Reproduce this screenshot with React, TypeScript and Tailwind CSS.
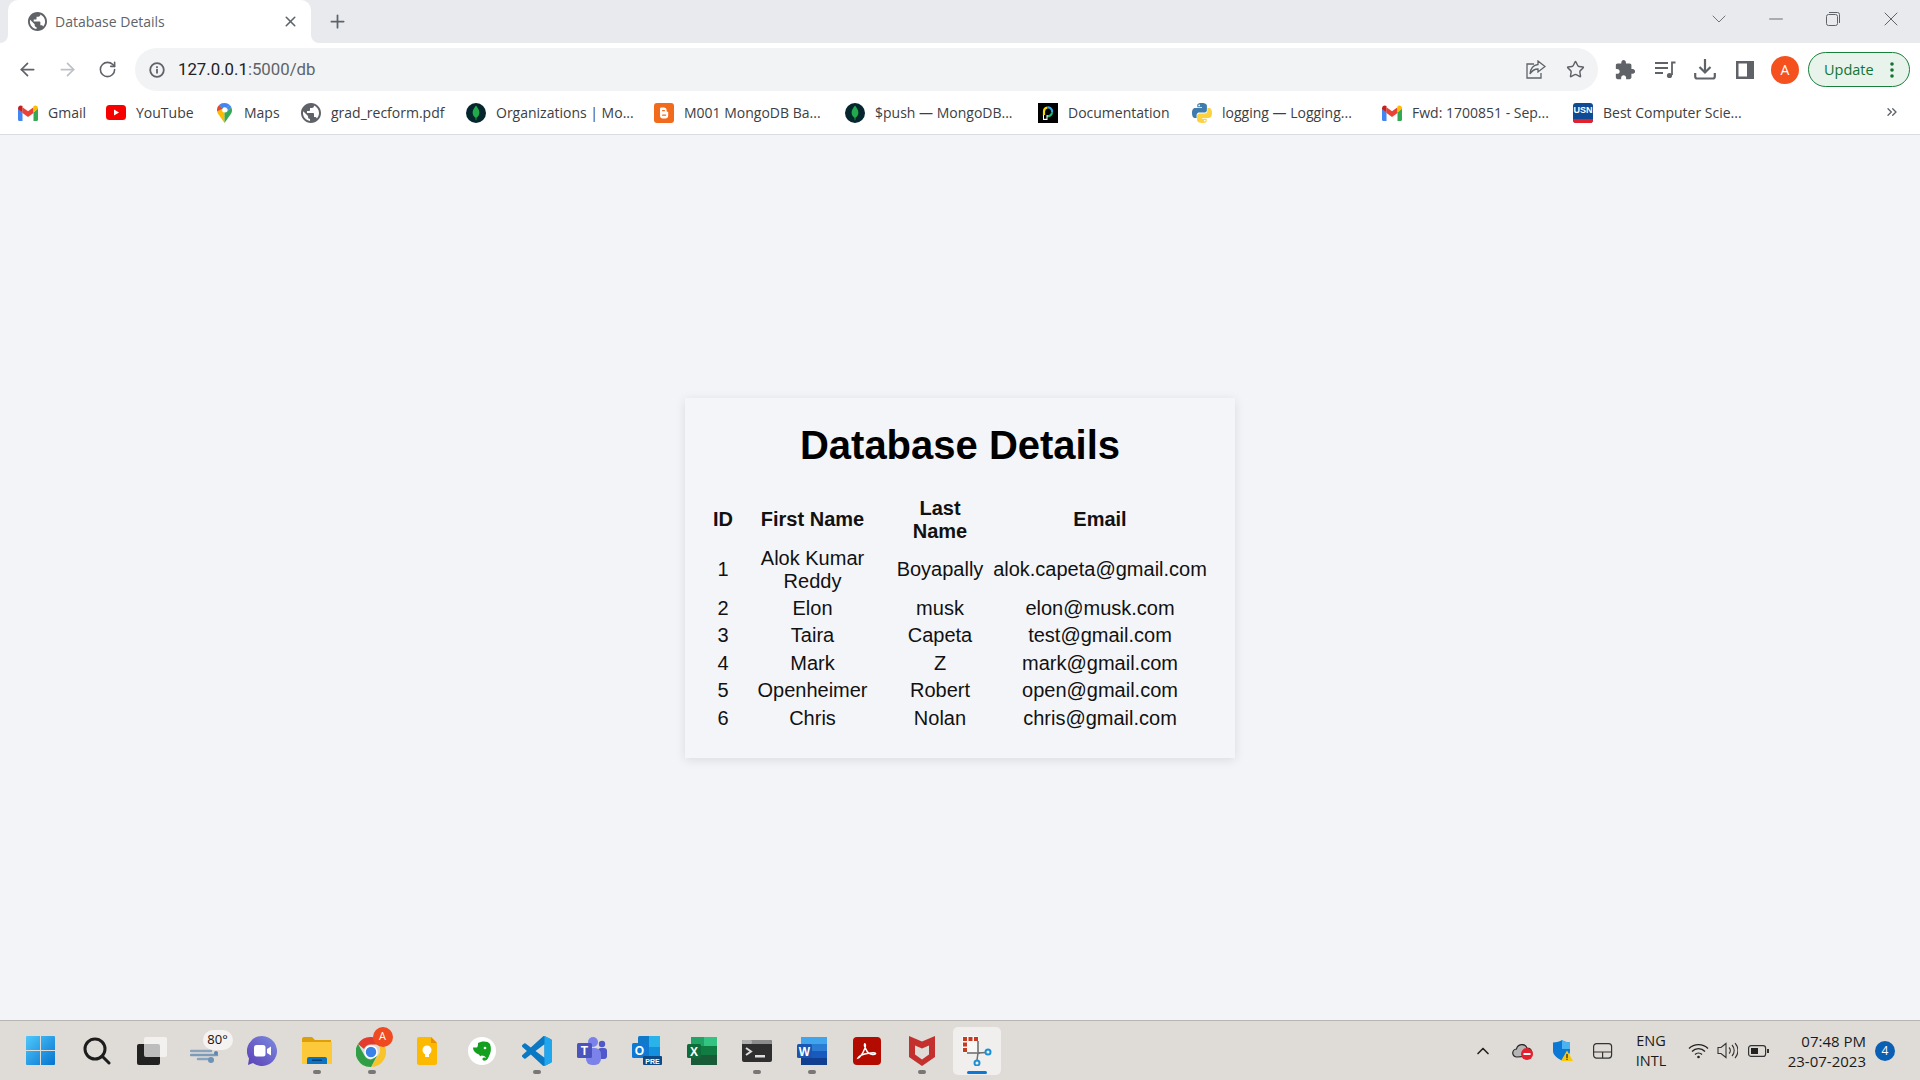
import React from "react";
import { ArrowLeft, ArrowRight, RotateCw, Plus, X, Minus, ChevronDown, ChevronUp, Star, ChevronsRight } from "lucide-react";

const globe = "M12 2C6.48 2 2 6.48 2 12s4.48 10 10 10 10-4.48 10-10S17.52 2 12 2zm-1 17.93c-3.95-.49-7-3.85-7-7.93 0-.62.08-1.21.21-1.79L9 15v1c0 1.1.9 2 2 2v1.93zm6.9-2.54c-.26-.81-1-1.39-1.9-1.39h-1v-3c0-.55-.45-1-1-1H8v-2h2c.55 0 1-.45 1-1V7h2c1.1 0 2-.9 2-2v-.41c2.93 1.19 5 4.06 5 7.41 0 2.08-.8 3.97-2.1 5.39z";
const puzzle = "M20.5 11H19V7c0-1.1-.9-2-2-2h-4V3.5C13 2.12 11.88 1 10.5 1S8 2.12 8 3.5V5H4c-1.1 0-1.99.9-1.99 2v3.8H3.5c1.49 0 2.7 1.21 2.7 2.7s-1.21 2.7-2.7 2.7H2V20c0 1.1.9 2 2 2h3.8v-1.5c0-1.49 1.21-2.7 2.7-2.7 1.49 0 2.7 1.21 2.7 2.7V22H17c1.1 0 2-.9 2-2v-4h1.5c1.38 0 2.5-1.12 2.5-2.5S21.88 11 20.5 11z";

const Globe = ({ size = 20 }: { size?: number }) => (
  <svg width={size} height={size} viewBox="2 2 20 20"><path d={globe} fill="#5f6368" /></svg>
);
const Gmail = () => (
  <svg width="20" height="16" viewBox="0 0 20 16">
    <path d="M0 3v11.5c0 .8.6 1.5 1.4 1.5H4.5V7.5z" fill="#4285f4" />
    <path d="M20 3v11.5c0 .8-.6 1.5-1.4 1.5H15.5V7.5z" fill="#34a853" />
    <path d="M4.5 8V2.2L10 6.3l5.5-4.1V8L10 12z" fill="#ea4335" />
    <path d="M0 3.2C0 .9 2.6-.5 4.5 1v6.5L0 4z" fill="#c5221f" />
    <path d="M20 3.2C20 .9 17.4-.5 15.5 1v6.5L20 4z" fill="#fbbc04" />
  </svg>
);
const YouTube = () => (
  <svg width="20" height="15" viewBox="0 0 20 15">
    <rect width="20" height="15" rx="3.5" fill="#f70000" />
    <path d="M8 4.5v6l5-3z" fill="#fff" />
  </svg>
);
const Maps = () => (
  <svg width="15" height="20" viewBox="0 0 15 20">
    <path d="M7.5 0C3.4 0 0 3.2 0 7.3c0 1.5.5 2.7 1.2 3.8l6.3 8.9V9.6a2.4 2.4 0 0 1-2-3.8z" fill="#fbbc04" />
    <path d="M13.8 11.1c.7-1.1 1.2-2.3 1.2-3.8 0-1.1-.3-2.2-.7-3.1L9.4 9.2 7.5 9.6V20z" fill="#34a853" />
    <path d="M2.1 2.2C.8 3.5 0 5.3 0 7.3c0 .3 0 .6.1.9l5.4-2.4z" fill="#ea4335" />
    <path d="M7.5 0C5.400 0 3.500.8 2.100 2.200L5.500 5.800A2.400 2.400 0 0 1 9.400 4.900L12.800 2.100A7.500 7.500 0 0 0 7.500 0z" fill="#4285f4" />
    <path d="M12.800 2.100 9.400 4.900a2.400 2.400 0 0 1 0 4.300l4.900-5A7.400 7.400 0 0 0 12.800 2.100z" fill="#4285f4" />
  </svg>
);
const Mongo = () => (
  <svg width="20" height="20" viewBox="0 0 20 20">
    <circle cx="10" cy="10" r="10" fill="#04262c" />
    <path d="M10 2.500c1 1.700 3.400 3.700 3.400 7 0 2.800-1.800 4.500-2.900 5.200l-.2 2.500h-.6l-.2-2.500C8.400 14 6.600 12.300 6.600 9.500c0-3.300 2.400-5.300 3.400-7z" fill="#22a94a" />
  </svg>
);
const Blogger = () => (
  <svg width="20" height="20" viewBox="0 0 20 20">
    <rect width="20" height="20" rx="3" fill="#f26a1b" />
    <path d="M6 5.800C6 5 6.700 4.500 7.500 4.500h2.300c1.700 0 2.800 1.100 2.800 2.500V8c0 .6.400.8 1 .8.400 0 .6.300.6.600v3.400c0 1.500-1.100 2.700-2.700 2.700H8.600C7.100 15.500 6 14.300 6 12.800z" fill="#fff" />
    <rect x="8" y="7" width="3" height="1.300" rx=".6" fill="#f26a1b" />
    <rect x="8" y="11.500" width="4.200" height="1.300" rx=".6" fill="#f26a1b" />
  </svg>
);
const Docs = () => (
  <svg width="20" height="20" viewBox="0 0 20 20">
    <rect width="20" height="20" fill="#000" />
    <path d="M6 13V8.500a4 4 0 0 1 3.500-4" stroke="#f5d90a" strokeWidth="2.200" fill="none" />
    <path d="M9.500 4.500a4 4 0 0 1 4.500 5" stroke="#2aa7e8" strokeWidth="2.200" fill="none" />
    <path d="M14 9.500a4 4 0 0 1-5 3.500" stroke="#18c07a" strokeWidth="2.200" fill="none" />
    <rect x="5" y="12" width="4.500" height="5" fill="#fff" />
    <rect x="6" y="12" width="2.500" height="3.800" fill="#000" />
  </svg>
);
const Python = () => (
  <svg width="20" height="20" viewBox="0 0 20 20">
    <path d="M9.900 0C5 0 5.300 2.100 5.300 2.100v2.200h4.700V5H3.300S0 4.600 0 9.900c0 5.200 2.900 5 2.900 5h1.700v-2.400s-.1-2.900 2.800-2.900h4.800s2.700 0 2.700-2.600V2.700S14.800 0 9.900 0zM7.200 1.500a.9.900 0 1 1 0 1.800.9.900 0 0 1 0-1.800z" fill="#3f7cac" />
    <path d="M10.100 20c4.900 0 4.600-2.100 4.600-2.100v-2.200H10V15h6.700s3.300.4 3.300-4.900c0-5.200-2.900-5-2.900-5h-1.700v2.400s.1 2.900-2.800 2.900H7.800s-2.700 0-2.700 2.600v4.300S4.800 20 10.100 20zm2.700-1.500a.9.900 0 1 1 0-1.800.9.900 0 0 1 0 1.800z" fill="#fdd23e" />
  </svg>
);
const Usn = () => (
  <div className="relative w-[20px] h-[20px] rounded-[3px] bg-[#0e4b94] overflow-hidden flex justify-center">
    <span className="text-[9px] leading-[15px] font-bold text-white" style={{ fontFamily: '"Liberation Sans", sans-serif' }}>USN</span>
    <div className="absolute left-0 right-0 bottom-0 h-[4px] bg-[#e3202e]" />
  </div>
);

const bookmarks: [React.ReactNode, string, number][] = [
  [<Gmail />, "Gmail", 38],
  [<YouTube />, "YouTube", 58],
  [<Maps />, "Maps", 37],
  [<Globe />, "grad_recform.pdf", 115],
  [<Mongo />, "Organizations | Mo...", 138],
  [<Blogger />, "M001 MongoDB Ba...", 141],
  [<Mongo />, "$push — MongoDB...", 143],
  [<Docs />, "Documentation", 104],
  [<Python />, "logging — Logging...", 140],
  [<Gmail />, "Fwd: 1700851 - Sep...", 141],
  [<Usn />, "Best Computer Scie...", 140],
];

const rows = [
  ["1", <>Alok Kumar<br />Reddy</>, "Boyapally", "alok.capeta@gmail.com"],
  ["2", "Elon", "musk", "elon@musk.com"],
  ["3", "Taira", "Capeta", "test@gmail.com"],
  ["4", "Mark", "Z", "mark@gmail.com"],
  ["5", "Openheimer", "Robert", "open@gmail.com"],
  ["6", "Chris", "Nolan", "chris@gmail.com"],
];

const ToolBtn = ({ children }: { children: React.ReactNode }) => (
  <div className="w-[40px] h-[40px] flex items-center justify-center shrink-0">{children}</div>
);

const Win = () => (
  <svg width="29" height="29" viewBox="0 0 29 29">
    <defs>
      <linearGradient id="wg" x1="0" y1="0" x2="1" y2="1"><stop offset="0" stopColor="#4fc8fb" /><stop offset="1" stopColor="#0673d0" /></linearGradient>
    </defs>
    <path d="M1 0h13v14H0V1a1 1 0 0 1 1-1zM15 0h13a1 1 0 0 1 1 1v13H15zM0 15h14v14H1a1 1 0 0 1-1-1zM15 15h14v13a1 1 0 0 1-1 1H15z" fill="url(#wg)" />
  </svg>
);
const Search = () => (
  <svg width="28" height="28" viewBox="0 0 28 28" fill="none" stroke="#1d1d1d" strokeWidth="3"><circle cx="12" cy="12" r="10" /><path d="M19 19l7 7" strokeLinecap="round" /></svg>
);
const TaskView = () => (
  <svg width="30" height="28" viewBox="0 0 30 28">
    <rect x="0" y="7" width="23" height="21" rx="2" fill="#222" />
    <rect x="7" y="0" width="23" height="20" rx="2" fill="#fafafa" fillOpacity=".72" />
  </svg>
);
const Weather = () => (
  <div className="relative w-[40px] h-[40px]">
    <svg className="absolute left-[3px] top-[14px]" width="30" height="20" viewBox="0 0 30 20" fill="none" stroke="#8aa3bd" strokeWidth="2.500" strokeLinecap="round">
      <path d="M1 6h20" /><path d="M1 10h26" stroke="#7d9ab8" /><path d="M8 14h12" />
      <circle cx="26" cy="8" r="2" fill="#5f86ad" stroke="none" /><circle cx="21" cy="15" r="3" fill="#6f93b5" stroke="none" />
    </svg>
    <div className="absolute left-[16px] top-[-1px] w-[30px] h-[20px] rounded-full bg-[#f4f3f1] flex items-center justify-center text-[13px] text-[#111]">80°</div>
  </div>
);
const Chat = () => (
  <svg width="30" height="30" viewBox="0 0 30 30">
    <defs><linearGradient id="cg" x1="0" y1="1" x2="1" y2="0"><stop offset="0" stopColor="#5b3fb6" /><stop offset="1" stopColor="#7b8be0" /></linearGradient></defs>
    <path d="M15 0a15 15 0 1 1-9 27l-5 2 1-6.500A15 15 0 0 1 15 0z" fill="url(#cg)" />
    <rect x="7" y="9" width="11.500" height="11.500" rx="2.500" fill="#fff" />
    <path d="M20 13l4-2.500v9L20 17z" fill="#fff" />
  </svg>
);
const Folder = () => (
  <svg width="30" height="28" viewBox="0 0 30 28">
    <path d="M0 2a2 2 0 0 1 2-2h8l3 3h16v4H0z" fill="#dd9e0a" />
    <path d="M0 5h30v22H0z" fill="#fcc93a" />
    <path d="M5 27v-5a2 2 0 0 1 2-2h16a2 2 0 0 1 2 2v5z" fill="#0a73c4" />
    <rect x="10" y="22.500" width="10" height="1.500" fill="#063f75" />
  </svg>
);
const Chrome = () => (
  <div className="relative w-[30px] h-[30px] -translate-x-[1px] translate-y-[1px]">
    <svg width="30" height="30" viewBox="0 0 30 30">
      <path d="M15 0a15 15 0 0 1 13 7.500H15a7.500 7.500 0 0 0-7 4.500L2 7A15 15 0 0 1 15 0z" fill="#e33b2e" />
      <path d="M28 7.500A15 15 0 0 1 15 30l6.500-11a7.500 7.500 0 0 0 0-11.500z" fill="#f9c32b" />
      <path d="M15 30A15 15 0 0 1 2 7l6.500 11.500A7.500 7.500 0 0 0 15 22.500l6-3.500z" fill="#2f9e44" />
      <circle cx="15" cy="15" r="6" fill="#3b82e8" stroke="#fff" strokeWidth="1.500" />
    </svg>
    <div className="absolute left-[17px] top-[-10px] w-[20px] h-[20px] rounded-full bg-[#ef4a20] text-white text-[11px] flex items-center justify-center">A</div>
  </div>
);
const Keep = () => (
  <svg width="20" height="28" viewBox="0 0 20 28">
    <path d="M2 0h12l6 6v20a2 2 0 0 1-2 2H2a2 2 0 0 1-2-2V2a2 2 0 0 1 2-2z" fill="#fdb900" />
    <path d="M14 0l6 6h-6z" fill="#e98e00" />
    <circle cx="10" cy="13" r="4.500" fill="#fff" /><rect x="8" y="17" width="4" height="3" fill="#fff" />
  </svg>
);
const Evernote = () => (
  <svg width="28" height="28" viewBox="0 0 28 28">
    <circle cx="14" cy="14" r="14" fill="#fff" />
    <path d="M10 6c3-2 10-2.500 12 1 1.500 4 1 8-.5 11-1 2.500-2 5-4 5.500-2 .5-3.500-.5-3-2 .5-1.300 2.500-1.300 3.500 0-.2-2-2-3-4.500-3-1 1.500-1.500.5-2.500-1C8 16.500 5 14 5 10.500h3.500C9.500 10.500 10 9 10 6z" fill="#14a01e" />
    <circle cx="17" cy="11" r="1.300" fill="#fff" />
  </svg>
);
const VSCode = () => (
  <svg width="30" height="30" viewBox="0 0 100 100">
    <path fillRule="evenodd" d="M70.900 99.300a6.200 6.200 0 0 0 5-.2l20.600-9.900a6.200 6.200 0 0 0 3.500-5.600V16.400a6.200 6.200 0 0 0-3.500-5.600L75.900.9a6.200 6.200 0 0 0-7.100 1.200L29.400 38 12.200 25a4.200 4.200 0 0 0-5.300.2L1.400 30.200a4.200 4.200 0 0 0 0 6.200L16.300 50 1.400 63.600a4.200 4.200 0 0 0 0 6.200l5.500 5a4.200 4.200 0 0 0 5.300.2L29.400 62 68.800 98a6.200 6.200 0 0 0 2.100 1.300zM75 27.300 45.100 50 75 72.700z" fill="#0a78c2" />
    <path d="M75 .4l21.500 10.400a6.200 6.200 0 0 1 3.500 5.600v66.900a6.200 6.200 0 0 1-3.500 5.600L75 99.600z" fill="#1fa6ee" />
  </svg>
);
const Teams = () => (
  <svg width="30" height="28" viewBox="0 0 30 28">
    <circle cx="25" cy="7" r="3.200" fill="#5059c9" /><rect x="21" y="11" width="9" height="11" rx="3" fill="#5059c9" />
    <circle cx="16" cy="5" r="5" fill="#7b83eb" /><rect x="9" y="11" width="15" height="17" rx="6" fill="#7b83eb" />
    <rect x="0" y="6" width="15" height="15" rx="1.500" fill="#4b53bc" />
    <text x="7.500" y="18" textAnchor="middle" fill="#fff" fontSize="12" fontWeight="700" fontFamily="Liberation Sans">T</text>
  </svg>
);
const Outlook = () => (
  <svg width="30" height="29" viewBox="0 0 30 29">
    <rect x="6" y="0" width="22" height="22" rx="1.500" fill="#0e7ac9" />
    <rect x="17" y="0" width="11" height="11" fill="#29b3e8" /><rect x="17" y="11" width="11" height="11" fill="#1490df" />
    <rect x="0" y="7" width="15" height="15" rx="1.500" fill="#0f78d4" />
    <text x="7.500" y="19" textAnchor="middle" fill="#fff" fontSize="12" fontWeight="700" fontFamily="Liberation Sans">O</text>
    <rect x="11" y="20" width="19" height="9" rx="1" fill="#104a85" />
    <text x="20.500" y="27.500" textAnchor="middle" fill="#fff" fontSize="7" fontWeight="700" fontFamily="Liberation Sans">PRE</text>
  </svg>
);
const Excel = () => (
  <svg width="30" height="28" viewBox="0 0 30 28">
    <rect x="4" y="0" width="26" height="28" rx="1.500" fill="#107c41" />
    <rect x="17" y="0" width="13" height="9" fill="#33c481" /><rect x="4" y="0" width="13" height="9" fill="#21a366" />
    <rect x="17" y="9" width="13" height="9" fill="#107c41" /><rect x="17" y="18" width="13" height="10" fill="#185c37" /><rect x="4" y="18" width="13" height="10" fill="#185c37" />
    <rect x="0" y="7" width="14" height="14" rx="1.500" fill="#0e6b3a" />
    <text x="7" y="18.500" textAnchor="middle" fill="#fff" fontSize="12" fontWeight="700" fontFamily="Liberation Sans">X</text>
  </svg>
);
const Terminal = () => (
  <svg width="30" height="22" viewBox="0 0 30 22">
    <rect width="30" height="22" rx="2" fill="#2f2f2f" />
    <path d="M0 2a2 2 0 0 1 2-2h26a2 2 0 0 1 2 2v2H0z" fill="#8c8c8c" /><rect x="0" y="0" width="10" height="4" rx="1.500" fill="#b0b0b0" />
    <path d="M4 8l5 3.500-5 3.500" stroke="#ddd" strokeWidth="2" fill="none" />
    <rect x="13" y="15" width="10" height="2.500" fill="#ddd" />
  </svg>
);
const Word = () => (
  <svg width="30" height="28" viewBox="0 0 30 28">
    <rect x="4" y="0" width="26" height="28" rx="1.500" fill="#185abd" />
    <rect x="4" y="0" width="26" height="7" fill="#41a5ee" /><rect x="4" y="7" width="26" height="7" fill="#2b7cd3" /><rect x="4" y="21" width="26" height="7" fill="#103f91" />
    <rect x="0" y="7" width="15" height="14" rx="1.500" fill="#1a55b0" />
    <text x="7.500" y="18.500" textAnchor="middle" fill="#fff" fontSize="12" fontWeight="700" fontFamily="Liberation Sans">W</text>
  </svg>
);
const Acrobat = () => (
  <svg width="28" height="28" viewBox="0 0 28 28">
    <rect width="28" height="28" rx="4" fill="#b30b00" />
    <path d="M5 21c3-1 5-5 7-10 1-3 0-5-.5-4-.8 1.500 2 7 4 9 2 1.500 6 2 7 .8.700-1.200-3-1.400-7-.5C11 17 6 19 5 21z" fill="none" stroke="#fff" strokeWidth="1.500" />
  </svg>
);
const McAfee = () => (
  <svg width="26" height="30" viewBox="0 0 26 30">
    <path d="M0 0l13 5.500L26 0v21l-13 9-13-9zM6 9.500v9l7 5 7-5v-9l-7 3z" fill="#c3302d" fillRule="evenodd" />
  </svg>
);
const Snip = () => (
  <svg width="30" height="30" viewBox="0 0 30 30" fill="none">
    <rect x="0" y="0" width="17" height="17" rx="2" fill="#f7f7f6" />
    <path d="M1 1h4v4H1zM6.500 1h4v4h-4zM12 1h4v4h-4zM1 6.500h4v4H1zM1 12h4v4H1z" fill="#c8391f" />
    <path d="M16 5v12" stroke="#8a8a8a" strokeWidth="2" />
    <path d="M5 17h13" stroke="#8a8a8a" strokeWidth="2" />
    <path d="M16 17l8-.5M16 17l-1 7" stroke="#6f6f6f" strokeWidth="1.500" />
    <circle cx="26" cy="16" r="2.500" stroke="#1b8fd8" strokeWidth="2" />
    <circle cx="15" cy="27" r="2.500" stroke="#1b8fd8" strokeWidth="2" />
  </svg>
);

const task: [React.ReactNode, boolean][] = [
  [<div className="-ml-[2px]"><Win /></div>, false],
  [<Search />, false],
  [<TaskView />, false],
  [<Weather />, false],
  [<Chat />, false],
  [<Folder />, true],
  [<Chrome />, true],
  [<Keep />, false],
  [<Evernote />, false],
  [<VSCode />, true],
  [<Teams />, false],
  [<Outlook />, false],
  [<Excel />, false],
  [<Terminal />, true],
  [<Word />, true],
  [<Acrobat />, false],
  [<McAfee />, true],
];

export default function App() {
  return (
    <div className="w-[1920px] h-[1080px] flex flex-col overflow-hidden bg-[#f3f4f8]" style={{ fontFamily: '"Open Sans", "Liberation Sans", sans-serif' }}>
      {/* tab strip */}
      <div className="h-[43px] bg-[#e8eaed] flex items-end shrink-0">
        <div className="relative ml-[8px] w-[303px] h-[43px] bg-white rounded-t-[10px] flex items-center pl-[20px] pr-[12px]">
          <svg className="absolute left-[-8px] bottom-0" width="8" height="8" viewBox="0 0 8 8"><path d="M8 0v8H0a8 8 0 0 0 8-8z" fill="#fff" /></svg>
          <svg className="absolute right-[-8px] bottom-0" width="8" height="8" viewBox="0 0 8 8"><path d="M0 0v8h8a8 8 0 0 1-8-8z" fill="#fff" /></svg>
          <Globe size={19} />
          <span className="ml-[8px] text-[14px] text-[#5f6368] whitespace-nowrap">Database Details</span>
          <X className="ml-auto" size={17} strokeWidth={2.2} color="#5f6368" />
        </div>
        <div className="h-[43px] flex items-center ml-[16px]">
          <Plus size={21} strokeWidth={2} color="#5f6368" />
        </div>
        <div className="ml-auto h-[38px] self-start flex items-center pr-[17px]">
          <div className="w-[24px] flex justify-center"><ChevronDown size={24} strokeWidth={1} color="#70757a" /></div>
          <div className="ml-[33px] w-[24px] flex justify-center"><Minus size={22} strokeWidth={1} color="#5f6368" /></div>
          <div className="ml-[33px] w-[24px] flex justify-center">
            <svg width="14" height="14" viewBox="0 0 14 14" fill="none" stroke="#5f6368"><rect x=".5" y="2.500" width="11" height="11" rx="2" /><path d="M3 .5h8.500a2 2 0 0 1 2 2V11" /></svg>
          </div>
          <div className="ml-[34px] w-[24px] flex justify-center"><X size={24} strokeWidth={1} color="#5f6368" /></div>
        </div>
      </div>

      {/* toolbar */}
      <div className="h-[48px] pt-[5px] bg-white flex items-center pl-[7px] shrink-0">
        <ToolBtn><ArrowLeft size={21} strokeWidth={2} color="#5f6368" /></ToolBtn>
        <ToolBtn><ArrowRight size={21} strokeWidth={2} color="#bdc1c6" /></ToolBtn>
        <ToolBtn><RotateCw size={19} strokeWidth={2} color="#5f6368" /></ToolBtn>
        <div className="ml-[8px] w-[1463px] h-[43px] rounded-full bg-[#f1f3f4] flex items-center pl-[14px] pr-[12px]">
          <svg width="16" height="16" viewBox="0 0 16 16" fill="none"><circle cx="8" cy="8" r="6.800" stroke="#5f6368" strokeWidth="1.800" /><rect x="7.100" y="7" width="1.800" height="4.500" fill="#5f6368" /><rect x="7.100" y="4.300" width="1.800" height="1.800" fill="#5f6368" /></svg>
          <span className="ml-[13px] text-[16.8px] text-[#202124] whitespace-nowrap" style={{ fontFamily: '"Roboto", sans-serif' }}>127.0.0.1<span className="text-[#5f6368]">:5000/db</span></span>
          <div className="ml-auto flex items-center">
            <svg className="mr-[20px]" width="20" height="19" viewBox="0 0 20 19" fill="none" stroke="#5f6368" strokeWidth="1.300"><path d="M8 4H1v14h14v-5" /><path d="M12 1l7 5.500-7 5.500V9c-4 0-6 1.500-8 5 .500-5 3-9 8-9.500z" /></svg>
            <Star className="mr-[1px]" size={19} strokeWidth={1.800} color="#5f6368" />
          </div>
        </div>
        <div className="ml-[7px] flex items-center">
          <ToolBtn><svg width="22" height="22" viewBox="0 0 24 24"><path d={puzzle} fill="#5f6368" /></svg></ToolBtn>
          <ToolBtn>
            <svg width="22" height="20" viewBox="0 0 22 20" fill="none" stroke="#5f6368" strokeWidth="1.800"><path d="M1 3h13M1 8h13M1 13h8" /><path d="M18 15V2.500h3.500" /><circle cx="15.500" cy="15.500" r="2.600" fill="#5f6368" strokeWidth="0" /></svg>
          </ToolBtn>
          <ToolBtn>
            <svg width="22" height="21" viewBox="0 0 22 21" fill="none" stroke="#5f6368" strokeWidth="2.200"><path d="M11 0v13M5.500 8l5.500 5.500L16.500 8" /><path d="M1.200 14v3.500a2 2 0 0 0 2 2h15.600a2 2 0 0 0 2-2V14" /></svg>
          </ToolBtn>
          <ToolBtn>
            <svg width="18" height="18" viewBox="0 0 18 18"><path d="M0 0h18v18H0zM2.500 2.500v13H11v-13z" fill="#5f6368" fillRule="evenodd" /></svg>
          </ToolBtn>
          <ToolBtn><div className="w-[28px] h-[28px] rounded-full bg-[#f4511e] text-white text-[14px] flex items-center justify-center">A</div></ToolBtn>
        </div>
        <div className="ml-[3px] w-[102px] h-[35px] rounded-full border-[1.5px] border-[#188038] bg-[#e8f3ec] flex items-center pl-[15px] shrink-0">
          <span className="text-[14.5px] text-[#137333]">Update</span>
          <svg className="ml-auto mr-[15px]" width="4" height="16" viewBox="0 0 4 16" fill="#137333"><circle cx="2" cy="2" r="1.800" /><circle cx="2" cy="8" r="1.800" /><circle cx="2" cy="14" r="1.800" /></svg>
        </div>
      </div>

      {/* bookmarks */}
      <div className="h-[44px] bg-white border-b border-[#dadce0] flex items-center pl-[18px] shrink-0 relative">
        {bookmarks.map(([icon, label, w], i) => (
          <div key={i} className="flex items-center mr-[20px] shrink-0">
            <div className="w-[20px] h-[20px] flex items-center justify-center">{icon}</div>
            <div className="ml-[10px] text-[14px] leading-[18px] text-[#3c4043] whitespace-nowrap" style={{ width: w }}>{label}</div>
          </div>
        ))}
        <ChevronsRight className="absolute left-[1884px] top-[13px]" size={16} strokeWidth={2} color="#5f6368" />
      </div>

      {/* page */}
      <div className="flex-1 flex items-center justify-center" style={{ fontFamily: '"Liberation Sans", Arial, sans-serif' }}>
        <div className="w-[550px] h-[360px] bg-[#f4f5f9] shadow-[0_2px_10px_rgba(0,0,0,0.1)] pt-[24px] pl-[23px] pr-[28px]">
          <h1 className="text-[40px] leading-[46px] font-bold text-black text-center mb-[26px] pl-[5px]">Database Details</h1>
          <table className="w-full table-fixed border-separate border-spacing-y-[2px] text-[20px] leading-[23px] text-[#111] text-center">
            <thead>
              <tr className="font-bold h-[48px]">
                <th className="w-[30px] font-bold">ID</th>
                <th className="w-[149px] font-bold">First Name</th>
                <th className="w-[106px] font-bold">Last<br />Name</th>
                <th className="font-bold">Email</th>
              </tr>
            </thead>
            <tbody>
              {rows.map((r, i) => (
                <tr key={i} className={i === 0 ? "h-[48px]" : "h-[25.5px]"}>
                  {r.map((c, j) => <td key={j} className="whitespace-nowrap p-0">{c}</td>)}
                </tr>
              ))}
            </tbody>
          </table>
        </div>
      </div>

      {/* taskbar */}
      <div className="h-[60px] bg-[#dfdcd7] border-t border-[#b8b6b1] flex items-center pl-[14px] shrink-0">
        {task.map(([icon, running], i) => (
          <div key={i} className="relative w-[55px] h-full flex items-center justify-center shrink-0">
            {icon}
            {running && <div className="absolute left-[24px] bottom-[6px] w-[8px] h-[4px] rounded-full bg-[#777]" />}
          </div>
        ))}
        <div className="relative ml-[4px] w-[48px] h-[48px] rounded-[5px] bg-[#f0efed] flex items-center justify-center shrink-0">
          <Snip />
          <div className="absolute left-[14px] bottom-[1px] w-[20px] h-[3px] rounded-full bg-[#0a78d4]" />
        </div>
        <div className="ml-auto flex items-center h-full pr-[16px] text-[#1a1a1a]">
          <div className="w-[40px] flex justify-center"><ChevronUp size={20} strokeWidth={2} color="#222" /></div>
          <div className="w-[40px] flex justify-center">
            <svg width="22" height="20" viewBox="0 0 22 20">
              <path d="M5 16a4 4 0 0 1-.5-8 5.500 5.500 0 0 1 10.500-1 4.500 4.500 0 0 1 3 8z" fill="#b5b5b5" stroke="#222" strokeWidth="1.200" />
              <circle cx="15" cy="13" r="6" fill="#e3202e" /><rect x="11.500" y="12" width="7" height="2" fill="#fff" />
            </svg>
          </div>
          <div className="w-[40px] flex justify-center">
            <svg width="20" height="21" viewBox="0 0 20 21">
              <path d="M9 0c2 1.500 4.500 2.500 8 2.500V11c0 4-3.500 7.500-8 9.500C4.500 18.500 0 15 0 11V2.500C3.500 2.500 7 1.500 9 0z" fill="#0a78d4" />
              <path d="M9 0c2 1.500 4.500 2.500 8 2.500V9H9z" fill="#4bb4f0" />
              <path d="M14 10.500l6 10.500H8z" fill="#f9c80e" /><rect x="13.400" y="14" width="1.200" height="4" fill="#222" /><rect x="13.400" y="18.700" width="1.200" height="1.200" fill="#222" />
            </svg>
          </div>
          <div className="w-[39px] flex justify-center">
            <svg width="20" height="16" viewBox="0 0 20 16" fill="none" stroke="#333" strokeWidth="1.200"><rect x=".6" y=".6" width="18" height="14.500" rx="3" /><path d="M.6 9h18M9.600 9v6" /></svg>
          </div>
          <div className="w-[58px] text-center text-[14.5px] leading-[20px]">ENG<br />INTL</div>
          <div className="w-[36px] flex justify-center">
            <svg width="21" height="16" viewBox="0 0 21 16" fill="none" stroke="#222" strokeWidth="1.300"><path d="M1 5.500a13.500 13.500 0 0 1 19 0M4 8.500a9 9 0 0 1 13 0M7 11.500a5 5 0 0 1 7 0" /><circle cx="10.500" cy="14" r="1.300" fill="#222" stroke="none" /></svg>
          </div>
          <div className="w-[22px] flex justify-center">
            <svg width="21" height="17" viewBox="0 0 21 17" fill="none" stroke="#333" strokeWidth="1.100"><path d="M1 5.500h3l5-4v14l-5-4H1z" /><path d="M12 5.500a4 4 0 0 1 0 6M15 3a8 8 0 0 1 0 11M18 1a11 11 0 0 1 0 15" /></svg>
          </div>
          <div className="w-[40px] flex justify-center">
            <svg width="21" height="12" viewBox="0 0 21 12" fill="none"><rect x=".6" y=".6" width="17" height="10.800" rx="2.500" stroke="#333" strokeWidth="1.200" /><rect x="3" y="3" width="7" height="6" fill="#222" /><path d="M19 4h2v4h-2z" fill="#333" /></svg>
          </div>
          <div className="w-[88px] text-right text-[15px] leading-[20px] whitespace-nowrap">07:48 PM<br />23-07-2023</div>
          <div className="w-[38px] flex justify-center">
            <div className="w-[20px] h-[20px] rounded-full bg-[#0a5fb4] text-white text-[12px] flex items-center justify-center">4</div>
          </div>
        </div>
      </div>
    </div>
  );
}
